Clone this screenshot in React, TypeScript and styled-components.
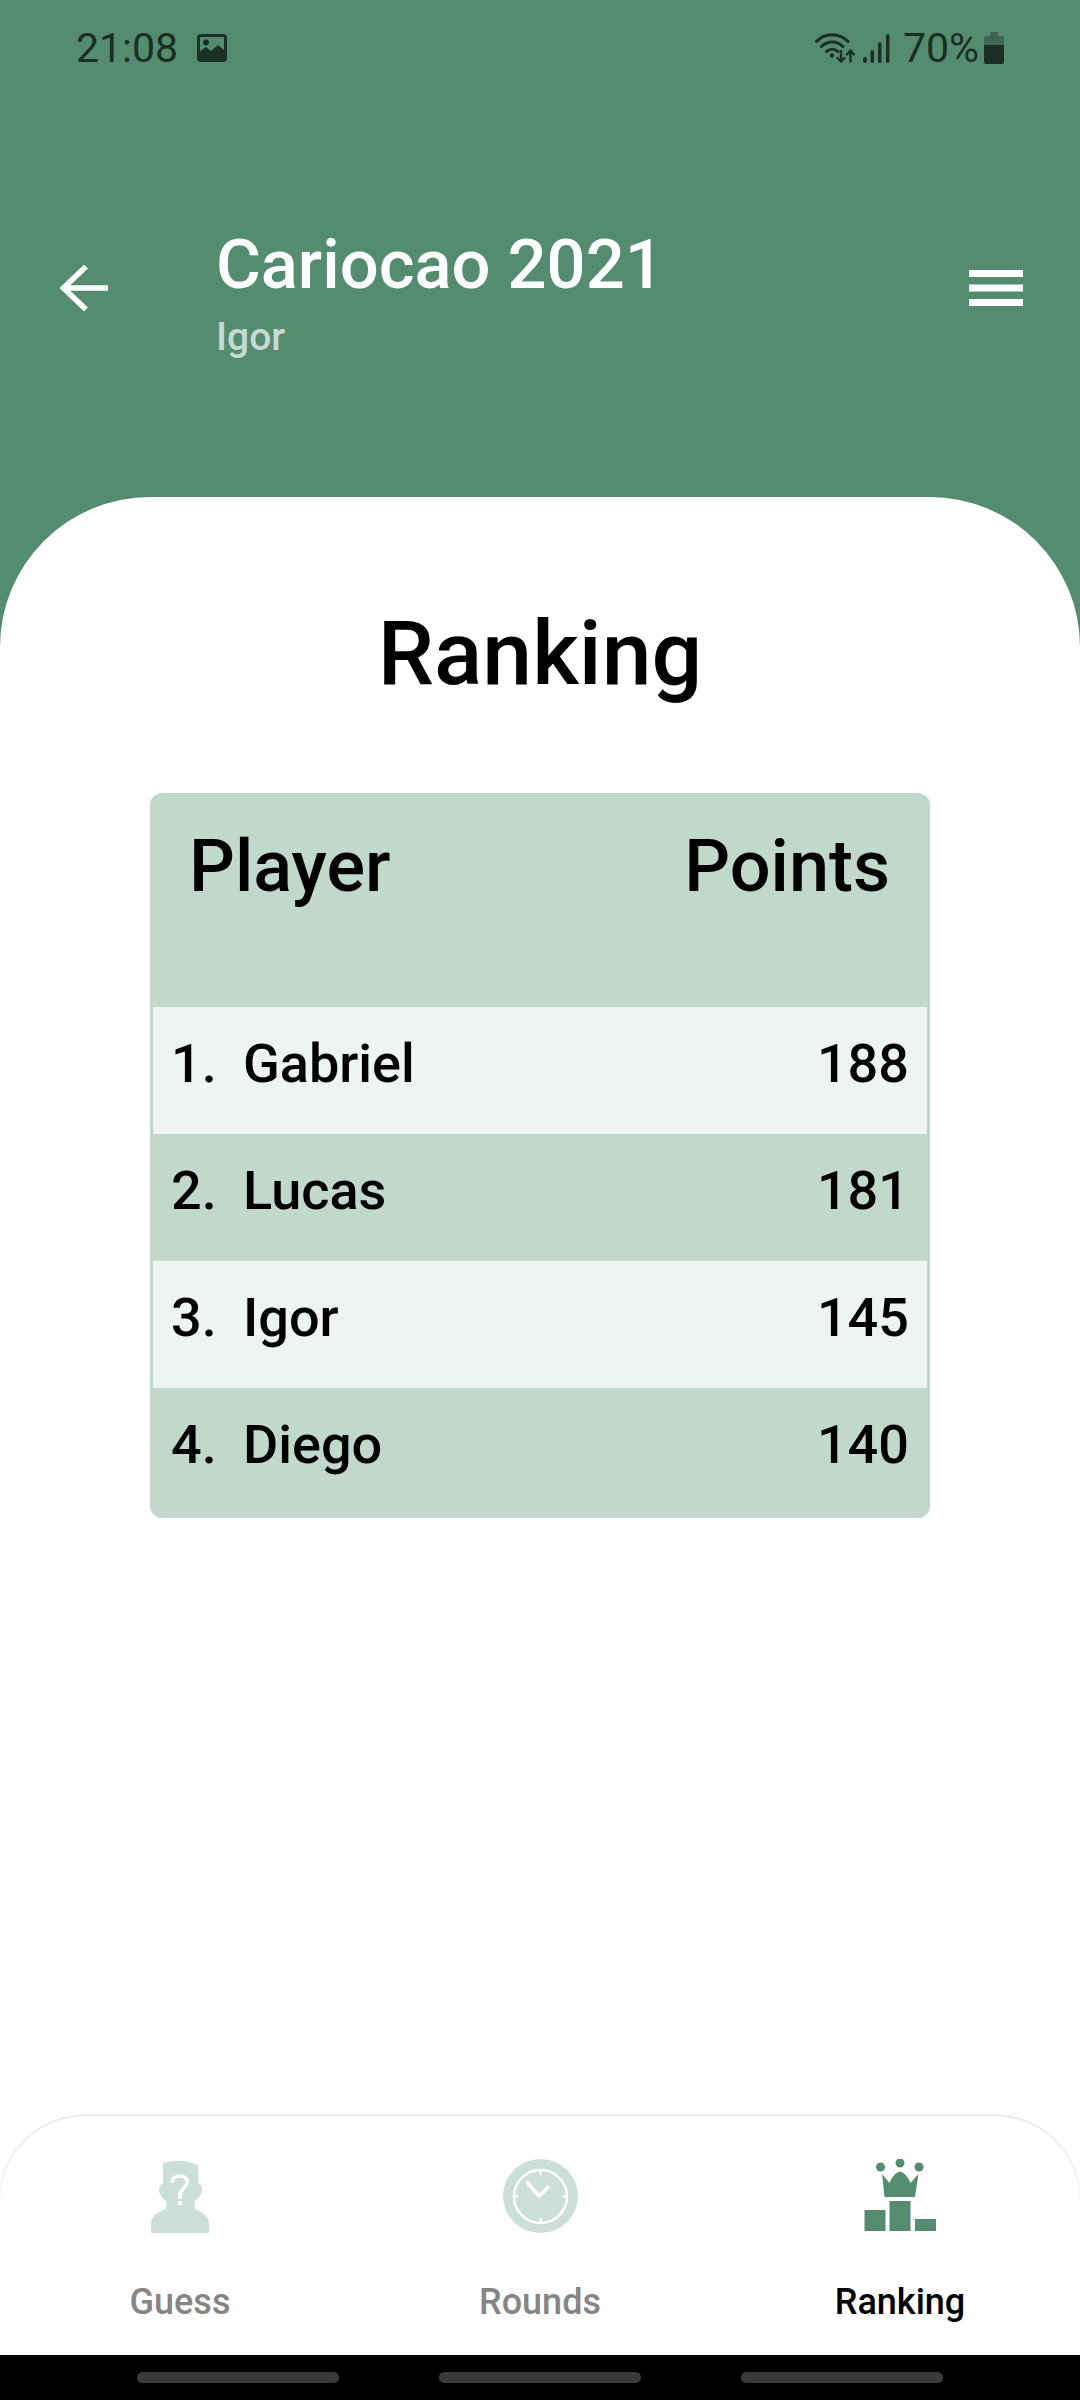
import React from "react";
import styled, { createGlobalStyle } from "styled-components";

const GlobalStyle = createGlobalStyle`
  html, body {
    margin: 0;
    padding: 0;
    background: #548c70;
  }
  #root {
    width: 1080px;
    height: 2400px;
  }
`;

const Page = styled.div`
  width: 1080px;
  height: 2400px;
  display: flex;
  flex-direction: column;
  overflow: hidden;
  background: #548c70;
  font-family: Roboto, "Noto Sans", sans-serif;
  color: #000;
`;

const StatusBar = styled.div`
  height: 96px;
  padding: 0 76px;
  box-sizing: border-box;
  display: flex;
  align-items: center;
  justify-content: space-between;
  color: #1b2f25;
  flex-shrink: 0;
`;

const StatusGroup = styled.div<{ $gap: number }>`
  display: flex;
  align-items: center;
  gap: ${(p) => p.$gap}px;
`;

const StatusText = styled.span<{ $left: number; $right: number }>`
  margin: 0 ${(p) => p.$right}px 0 ${(p) => p.$left}px;
  font-size: 41px;
  line-height: 46px;
`;

const Header = styled.header`
  height: 401px;
  padding: 129px 57px 0 60px;
  box-sizing: border-box;
  display: flex;
  align-items: flex-start;
  flex-shrink: 0;
`;

const IconButton = styled.div<{ $top: number }>`
  display: flex;
  margin-top: ${(p) => p.$top}px;
  flex-shrink: 0;
`;

const HeaderText = styled.div`
  flex: 1;
  padding-left: 108px;
`;

const Title = styled.h1`
  margin: 0;
  font-size: 68.7px;
  line-height: 80px;
  font-weight: 500;
  color: #fff;
`;

const Subtitle = styled.div`
  margin-top: 10px;
  font-size: 39px;
  line-height: 44px;
  font-weight: 500;
  color: #c6dbd0;
`;

const Sheet = styled.main`
  flex: 1;
  display: flex;
  flex-direction: column;
  align-items: center;
  background: #fff;
  border-radius: 150px 150px 0 0;
`;

const Heading = styled.h2`
  margin: 0;
  padding-top: 107px;
  font-size: 89.5px;
  line-height: 100px;
  font-weight: 500;
`;

const Table = styled.div`
  width: 780px;
  margin-top: 89px;
  padding: 0 3px;
  box-sizing: border-box;
  background: #c0d9cc;
  border-radius: 12px;
`;

const TableHead = styled.div`
  height: 214px;
  padding: 34px 37px 0 36px;
  box-sizing: border-box;
  display: flex;
  justify-content: space-between;
  align-items: flex-start;
  font-size: 72px;
  line-height: 80px;
  font-weight: 500;
`;

const Row = styled.div<{ $light: boolean; $height: number }>`
  height: ${(p) => p.$height}px;
  padding: 27px 18px 0 18px;
  box-sizing: border-box;
  display: flex;
  align-items: flex-start;
  background: ${(p) => (p.$light ? "#eef4f0" : "transparent")};
  font-size: 54px;
  line-height: 60px;
  font-weight: 500;
`;

const Rank = styled.span`
  width: 72px;
`;

const Name = styled.span`
  flex: 1;
`;

const TabBar = styled.nav`
  margin-top: auto;
  align-self: stretch;
  height: 239px;
  display: flex;
  border-radius: 85px 85px 0 0;
  box-shadow: 0 -1px 2px rgba(0, 0, 0, 0.16);
  background: #fff;
`;

const Tab = styled.div<{ $active: boolean }>`
  flex: 1;
  display: flex;
  flex-direction: column;
  align-items: center;
  padding-top: 43px;
  box-sizing: border-box;
  font-size: 36px;
  line-height: 40px;
  font-weight: 500;
  color: ${(p) => (p.$active ? "#000" : "#858585")};
`;

const TabIcon = styled.div`
  height: 74px;
  margin-bottom: 49px;
  display: flex;
  align-items: center;
  justify-content: center;
  filter: blur(0.6px);
`;

const NavBar = styled.div`
  height: 45px;
  flex-shrink: 0;
  background: #000;
  display: flex;
  justify-content: center;
  align-items: flex-start;
  gap: 100px;
  padding-top: 17px;
  box-sizing: border-box;
`;

const NavPill = styled.div`
  width: 202px;
  height: 11px;
  border-radius: 6px;
  background: #3b3b3b;
`;

const PictureIcon = () => (
  <svg width="30" height="28" viewBox="0 0 30 28">
    <rect x="1.5" y="1.5" width="27" height="25" rx="2.5" fill="none" stroke="currentColor" strokeWidth="3" />
    <circle cx="9" cy="8.5" r="3" fill="currentColor" />
    <path d="M2 26V18L9 13L14 17L21 11L28 17V26Z" fill="currentColor" />
  </svg>
);

const WifiIcon = () => (
  <svg width="40" height="30" viewBox="0 0 40 30" fill="none" stroke="currentColor" strokeLinecap="round">
    <path d="M1.5 8.5C10 -0.5 24 -0.5 33 8.5" strokeWidth="3" />
    <path d="M6.5 13.5C13 7.5 21.5 7.5 28 13.5" strokeWidth="3" />
    <path d="M11.5 18.5C15 15.5 19.5 15.5 23 18.5" strokeWidth="3" />
    <circle cx="17" cy="22.5" r="2.2" fill="currentColor" stroke="none" />
    <path d="M26 18V28.5M22.5 25L26 28.5L29.5 25" strokeWidth="2.4" />
    <path d="M35.5 28.5V18M32 21.5L35.5 17.5L39 21.5" strokeWidth="2.4" />
  </svg>
);

const SignalIcon = () => (
  <svg width="27" height="29" viewBox="0 0 27 29" fill="currentColor">
    <rect x="0" y="23" width="4" height="6" rx="2" />
    <rect x="7.5" y="16" width="3.5" height="13" rx="1.75" />
    <rect x="15" y="8" width="3.5" height="21" rx="1.75" />
    <rect x="23" y="0" width="3.5" height="29" rx="1.75" />
  </svg>
);

const BatteryIcon = () => (
  <svg width="20" height="32" viewBox="0 0 20 32">
    <path d="M6 0H14V4H18A2 2 0 0 1 20 6V13H0V6A2 2 0 0 1 2 4H6Z" fill="currentColor" opacity="0.4" />
    <path d="M0 13H20V30A2 2 0 0 1 18 32H2A2 2 0 0 1 0 30Z" fill="currentColor" />
  </svg>
);

const BackArrow = () => (
  <svg width="48" height="46" viewBox="0 0 48 46" fill="none" stroke="#fff" strokeWidth="5.5">
    <path d="M48 23H4" />
    <path d="M26 1.5L3.5 23L26 44.5" />
  </svg>
);

const MenuIcon = () => (
  <svg width="54" height="36" viewBox="0 0 54 36" fill="#fff">
    <rect y="0" width="54" height="7" />
    <rect y="14.5" width="54" height="7" />
    <rect y="29" width="54" height="7" />
  </svg>
);

const GuessIcon = () => (
  <svg width="58" height="74" viewBox="0 0 58 74">
    <path
      d="M12 4L21 2C30 1 40 3 47 6L47.5 24C51 26 52 31 50 35C48 38 47 40 44 42C43 46 43 49 45 51C51 53 57 56 58 64V74H0V64C1 56 7 53 13 51C16 49 16 46 15 42C12 40 11 38 9 35C7 31 8 26 12 24Z"
      fill="#cde0d7"
    />
    <path d="M21 24C21 19 25 17 29 17C34 17 37 20 36 24C35 29 29 30 29 36V40" fill="none" stroke="#fff" strokeWidth="3.5" />
    <circle cx="29" cy="44" r="2.2" fill="#fff" />
  </svg>
);

const RoundsIcon = () => (
  <svg width="75" height="74" viewBox="0 0 75 74">
    <ellipse cx="37.5" cy="37" rx="37.5" ry="37" fill="#cde0d7" />
    <circle cx="37.5" cy="37.5" r="26.5" fill="none" stroke="#fff" strokeWidth="2.5" />
    <path d="M23.5 22.5L36 37L46 27.5" fill="none" stroke="#fff" strokeWidth="3.5" />
    <path d="M37.5 11V16M37.5 59V64M11 37.5H15M60 37.5H64" stroke="#fff" strokeWidth="2.5" />
  </svg>
);

const RankingIcon = () => (
  <svg width="72" height="74" viewBox="0 0 72 74" fill="#548c70">
    <circle cx="36" cy="4" r="4.5" />
    <circle cx="16.5" cy="8" r="4.5" />
    <circle cx="55" cy="8" r="4.5" />
    <path d="M20.5 38L18 15L25.5 24C28 18 32 13 36 12.5C40 13 44 18 46.5 24L54.5 15L51 38Z" />
    <rect x="0.5" y="51" width="21" height="21" />
    <rect x="25.5" y="42" width="21" height="30" />
    <rect x="51" y="60" width="21" height="12" />
  </svg>
);

const players = [
  { rank: "1.", name: "Gabriel", points: 188 },
  { rank: "2.", name: "Lucas", points: 181 },
  { rank: "3.", name: "Igor", points: 145 },
  { rank: "4.", name: "Diego", points: 140 },
];

const tabs = [
  { label: "Guess", icon: <GuessIcon />, active: false },
  { label: "Rounds", icon: <RoundsIcon />, active: false },
  { label: "Ranking", icon: <RankingIcon />, active: true },
];

export default function App() {
  return (
    <Page>
      <GlobalStyle />
      <StatusBar>
        <StatusGroup $gap={19}>
          <StatusText $left={0} $right={0}>21:08</StatusText>
          <PictureIcon />
        </StatusGroup>
        <StatusGroup $gap={8}>
          <WifiIcon />
          <SignalIcon />
          <StatusText $left={5} $right={-3}>70%</StatusText>
          <BatteryIcon />
        </StatusGroup>
      </StatusBar>
      <Header>
        <IconButton $top={40}>
          <BackArrow />
        </IconButton>
        <HeaderText>
          <Title>Cariocao 2021</Title>
          <Subtitle>Igor</Subtitle>
        </HeaderText>
        <IconButton $top={45}>
          <MenuIcon />
        </IconButton>
      </Header>
      <Sheet>
        <Heading>Ranking</Heading>
        <Table>
          <TableHead>
            <span>Player</span>
            <span>Points</span>
          </TableHead>
          {players.map((p, i) => (
            <Row key={p.name} $light={i % 2 === 0} $height={i === 3 ? 130 : 127}>
              <Rank>{p.rank}</Rank>
              <Name>{p.name}</Name>
              <span>{p.points}</span>
            </Row>
          ))}
        </Table>
        <TabBar>
          {tabs.map((t) => (
            <Tab key={t.label} $active={t.active}>
              <TabIcon>{t.icon}</TabIcon>
              {t.label}
            </Tab>
          ))}
        </TabBar>
      </Sheet>
      <NavBar>
        <NavPill />
        <NavPill />
        <NavPill />
      </NavBar>
    </Page>
  );
}
